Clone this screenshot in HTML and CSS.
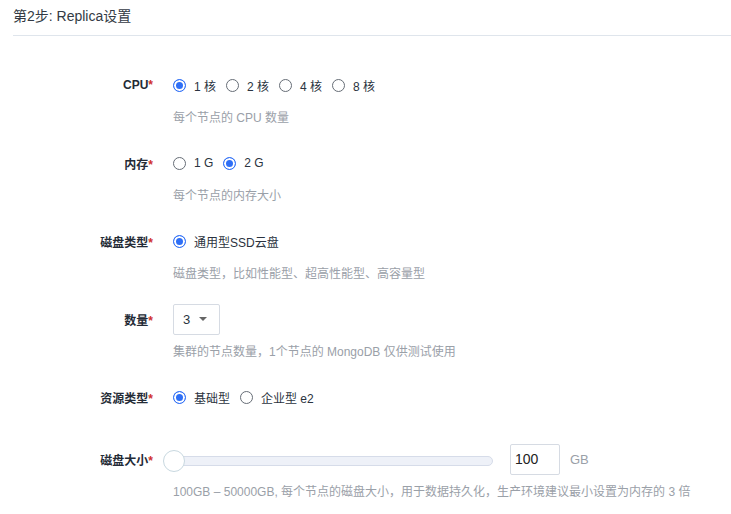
FILE: index.html
```html
<!DOCTYPE html>
<html lang="zh">
<head>
<meta charset="utf-8">
<link rel="stylesheet" href="styles.css">
</head>
<body>
<div class="page">
  <div class="header">第2步: Replica设置</div>
  <div class="form">
    <div class="item">
      <div class="row">
        <div class="label">CPU<span class="req">*</span></div>
        <div class="control">
          <label class="opt"><span class="radio on"></span>1 核</label>
          <label class="opt"><span class="radio"></span>2 核</label>
          <label class="opt"><span class="radio"></span>4 核</label>
          <label class="opt"><span class="radio"></span>8 核</label>
        </div>
      </div>
      <div class="help">每个节点的 CPU 数量</div>
    </div>
    <div class="item">
      <div class="row">
        <div class="label">内存<span class="req">*</span></div>
        <div class="control">
          <label class="opt"><span class="radio"></span>1 G</label>
          <label class="opt"><span class="radio on"></span>2 G</label>
        </div>
      </div>
      <div class="help">每个节点的内存大小</div>
    </div>
    <div class="item">
      <div class="row">
        <div class="label">磁盘类型<span class="req">*</span></div>
        <div class="control">
          <label class="opt"><span class="radio on"></span>通用型SSD云盘</label>
        </div>
      </div>
      <div class="help">磁盘类型，比如性能型、超高性能型、高容量型</div>
    </div>
    <div class="item">
      <div class="row">
        <div class="label">数量<span class="req">*</span></div>
        <div class="control">
          <div class="select"><span>3</span><span class="caret"></span></div>
        </div>
      </div>
      <div class="help">集群的节点数量，1个节点的 MongoDB 仅供测试使用</div>
    </div>
    <div class="item item-last">
      <div class="row">
        <div class="label">资源类型<span class="req">*</span></div>
        <div class="control">
          <label class="opt"><span class="radio on"></span>基础型</label>
          <label class="opt"><span class="radio"></span>企业型 e2</label>
        </div>
      </div>
    </div>
    <div class="item">
      <div class="row">
        <div class="label">磁盘大小<span class="req">*</span></div>
        <div class="control">
          <div class="slider"><div class="track"></div><div class="thumb"></div></div>
          <div class="input">100</div>
          <span class="unit">GB</span>
        </div>
      </div>
      <div class="help">100GB – 50000GB, 每个节点的磁盘大小，用于数据持久化，生产环境建议最小设置为内存的 3 倍</div>
    </div>
  </div>
</div>
</body>
</html>
```
FILE: styles.css
```css
* { box-sizing: border-box; }
html, body { margin: 0; padding: 0; background: #fff; }
body {
  font-family: "Liberation Sans", "Noto Sans CJK SC", sans-serif;
  font-size: 12px;
  color: #2b3340;
}
.page { padding-left: 13px; }
.header {
  font-size: 14px;
  line-height: 20px;
  padding-top: 6px;
  padding-bottom: 9px;
  border-bottom: 1px solid #dfe5ec;
  color: #333a44;
}
.form { margin-top: 33px; }
.item { margin-bottom: 19px; }
.item-last { margin-bottom: 30px; }
.row { display: flex; align-items: center; height: 32px; }
.label {
  width: 140px;
  text-align: right;
  margin-right: 20px;
  font-weight: bold;
  color: #242b36;
}
.req { color: #d0302d; }
.control { display: flex; align-items: center; height: 32px; }
.opt { display: flex; align-items: center; margin-right: 10px; color: #2b3340; }
.radio {
  width: 13px; height: 13px;
  border: 1px solid #666d76;
  border-radius: 50%;
  margin-right: 8px;
  background: #fff;
}
.radio.on {
  border: 1.5px solid #2f6ff6;
  background: #2f6ff6;
  box-shadow: inset 0 0 0 2px #fff;
}
.help {
  margin-top: 7px;
  line-height: 20px;
  padding-left: 160px;
  color: #9aa0a8;
}
.select {
  width: 47px; height: 31px;
  border: 1px solid #d6dbe3;
  border-radius: 2px;
  display: flex; align-items: center;
  padding-left: 9px;
  font-size: 13px;
}
.caret {
  margin-left: 9px;
  width: 0; height: 0;
  border-left: 4px solid transparent;
  border-right: 4px solid transparent;
  border-top: 4px solid #666;
}
.slider { position: relative; width: 320px; height: 22px; margin-top: 4px; }
.track {
  position: absolute; left: 0; right: 0; top: 6px;
  height: 10px;
  background: #eef1f8;
  border: 1px solid #d6dce9;
  border-radius: 5px;
}
.thumb {
  position: absolute; left: -10px; top: 0;
  width: 22px; height: 22px;
  border-radius: 50%;
  background: #fff;
  border: 1.5px solid #c8d8e0;
}
.input {
  margin-left: 17px;
  width: 50px; height: 31px;
  border: 1px solid #d6dbe3;
  border-radius: 2px;
  padding-left: 4px;
  display: flex; align-items: center;
  font-size: 14px;
  color: #222;
}
.unit { margin-left: 10px; color: #9aa0a8; font-size: 13px; }
```
